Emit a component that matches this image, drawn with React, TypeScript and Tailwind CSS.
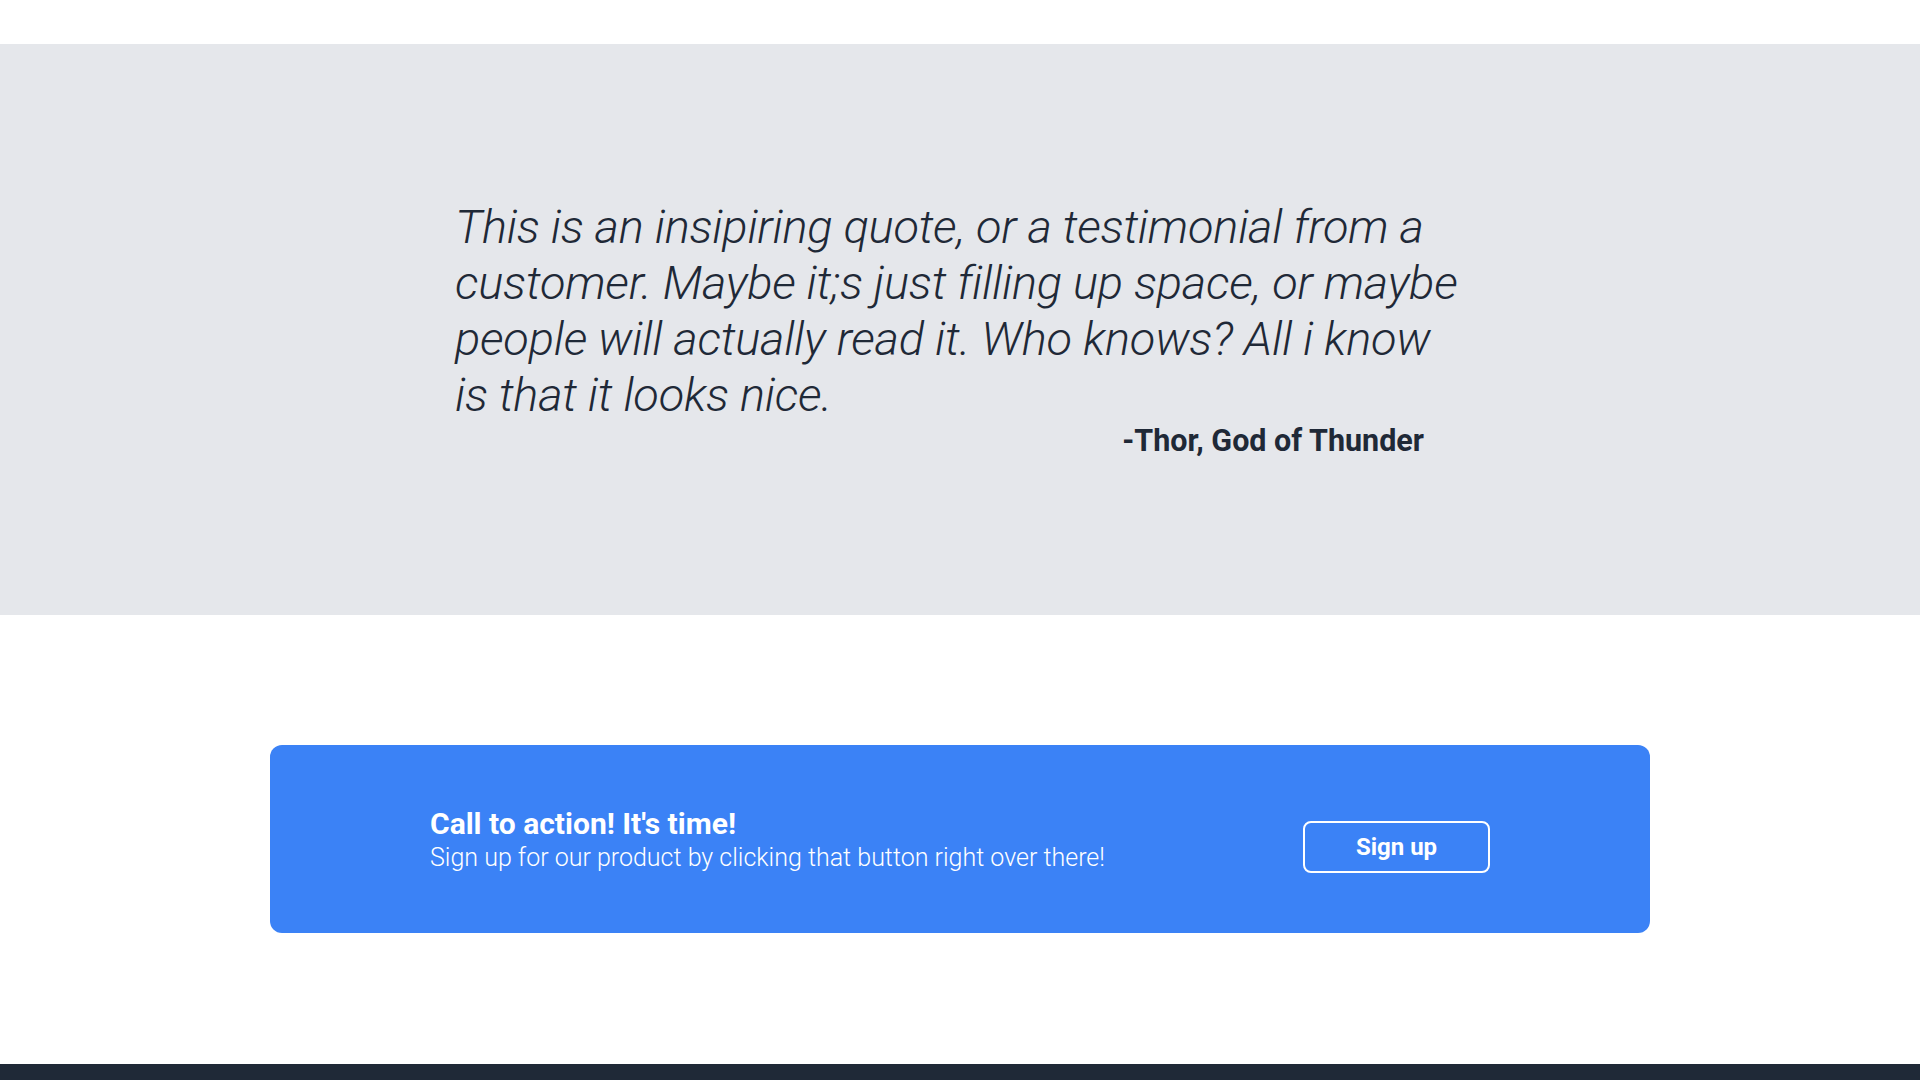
export default function App() {
  return (
    <div className="min-h-screen bg-white" style={{ fontFamily: "Roboto, 'Liberation Sans', sans-serif" }}>
      <div className="h-[44px]" />

      <section className="bg-[#e5e7eb] pt-[155px] pb-[156px]">
        <div className="mx-auto w-[1010px] text-[#1f2937]">
          <p className="pr-[4px] text-[47px] font-light italic leading-[56px] tracking-[-0.25px]">
            This is an insipiring quote, or a testimonial from a customer. Maybe it;s just filling up space, or
            maybe people will actually read it. Who knows? All i know is that it looks nice.
          </p>
          <p className="pr-[41px] text-right text-[30.5px] font-bold leading-9">-Thor, God of Thunder</p>
        </div>
      </section>

      <section className="pt-[130px] pb-[131px]">
        <div className="mx-auto flex h-[188px] w-[1380px] items-center justify-between rounded-xl bg-[#3b82f6] px-[160px] text-white">
          <div className="mt-[2px]">
            <h2 className="text-3xl font-bold leading-9">Call to action! It's time!</h2>
            <p className="text-[25px] font-light leading-8">
              Sign up for our product by clicking that button right over there!
            </p>
          </div>
          <button className="mt-[15px] h-[52px] w-[187px] rounded-lg border-2 border-white text-2xl font-bold">
            Sign up
          </button>
        </div>
      </section>

      <footer className="h-[200px] bg-[#1f2937]" />
    </div>
  );
}
